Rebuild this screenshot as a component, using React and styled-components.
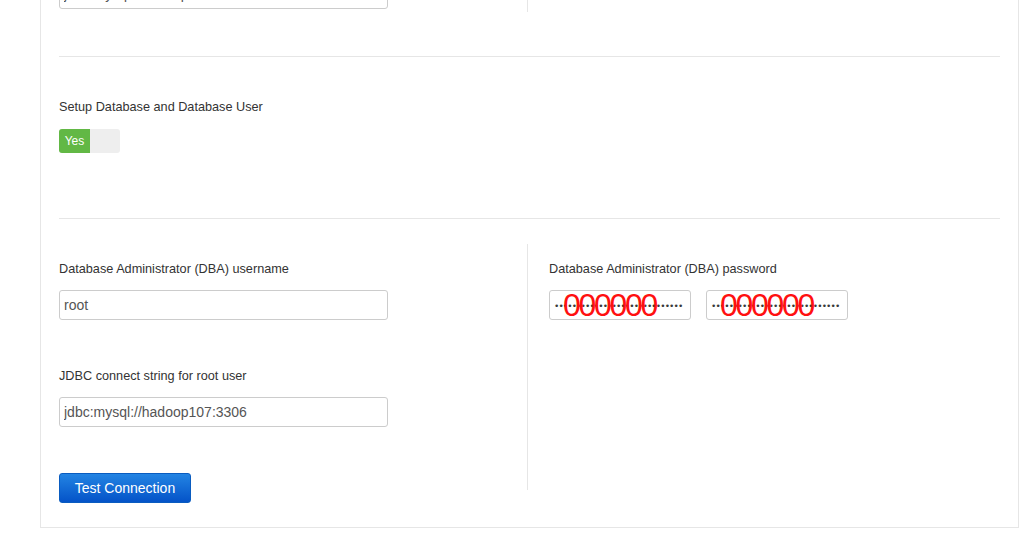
import React from 'react';
import styled, { createGlobalStyle } from 'styled-components';

const GlobalStyle = createGlobalStyle`
  body {
    margin: 0;
    background: #fff;
    font-family: "Liberation Sans", Arial, sans-serif;
    color: #333;
    overflow: hidden;
  }
`;

const Panel = styled.div`
  margin: -21px 0 0 40px;
  width: 979px;
  box-sizing: border-box;
  border: 1px solid #e6e6e6;
  border-top: none;
  padding: 0 18px 24px 18px;
`;

const Row = styled.div`
  display: grid;
  grid-template-columns: 468px 1fr;
  margin-top: ${p => p.top || 0}px;
`;

const Col = styled.div`
  display: flex;
  flex-direction: column;
  padding: ${p => p.pad || '0'};
  ${p => p.divided && 'border-left: 1px solid #e6e6e6; padding-left: 21px;'}
  ${p => p.short && `margin-bottom: ${p.short}px;`}
`;

const Rule = styled.div`
  height: 1px;
  background: #e6e6e6;
  margin-top: ${p => p.top}px;
`;

const Label = styled.div`
  font-size: 12.7px;
  line-height: 18px;
  color: #333;
  margin-top: ${p => p.top || 0}px;
`;

const Field = styled.input`
  box-sizing: border-box;
  width: ${p => p.w || 329}px;
  height: 30px;
  border: 1px solid #cccccc;
  border-radius: 3px;
  padding: 0 4px;
  font-family: "Liberation Sans", Arial, sans-serif;
  font-size: 14px;
  color: #555;
  margin-top: ${p => p.top || 0}px;
  outline: none;
  background: #fff;
`;

const Toggle = styled.div`
  display: flex;
  width: 61px;
  height: 24px;
  border-radius: 3px;
  overflow: hidden;
  background: #eeeeee;
  margin-top: 13px;
`;

const ToggleOn = styled.span`
  width: 31px;
  background: #62b845;
  color: #fff;
  font-size: 12px;
  line-height: 24px;
  text-align: center;
`;

const PasswordRow = styled.div`
  display: flex;
  gap: 15px;
  margin-top: 12px;
`;

const PasswordBox = styled.div`
  position: relative;
  box-sizing: border-box;
  width: 142px;
  height: 30px;
  border: 1px solid #cccccc;
  border-radius: 3px;
  padding-left: 5px;
  display: flex;
  align-items: center;
  overflow: hidden;
`;

const Dots = styled.span`
  font-size: 9.5px;
  letter-spacing: 1.1px;
  color: #3a3a3a;
  white-space: nowrap;
`;

const Marker = styled.span`
  position: absolute;
  left: 13px;
  top: -4px;
  font-size: 32px;
  line-height: 36px;
  letter-spacing: -2.3px;
  color: #ff1010;
`;

const Button = styled.button`
  width: 132px;
  height: 30px;
  margin-top: 46px;
  border: 1px solid #0a5cc0;
  border-radius: 3px;
  background: linear-gradient(#2384e3, #0453c8);
  color: #fff;
  font-family: "Liberation Sans", Arial, sans-serif;
  font-size: 14px;
  padding: 0;
`;

const dots = '•'.repeat(29);

export default function App() {
  return (
    <>
      <GlobalStyle />
      <Panel>
        <Row>
          <Col pad="0 0 3px 0">
            <Field defaultValue="jdbc:mysql://hadoop107:3306/metastore?useSSL=false" readOnly />
          </Col>
          <Col divided />
        </Row>
        <Rule top={44} />

        <Label top={41}>Setup Database and Database User</Label>
        <Toggle>
          <ToggleOn>Yes</ToggleOn>
        </Toggle>
        <Rule top={65} />

        <Row top={25}>
          <Col pad="16px 0 0 0">
            <Label>Database Administrator (DBA) username</Label>
            <Field top={12} defaultValue="root" readOnly />
            <Label top={47}>JDBC connect string for root user</Label>
            <Field top={12} defaultValue="jdbc:mysql://hadoop107:3306" readOnly />
            <Button>Test Connection</Button>
          </Col>
          <Col divided pad="16px 0 0 21px" short={13}>
            <Label>Database Administrator (DBA) password</Label>
            <PasswordRow>
              <PasswordBox>
                <Dots>{dots}</Dots>
                <Marker>000000</Marker>
              </PasswordBox>
              <PasswordBox>
                <Dots>{dots}</Dots>
                <Marker>000000</Marker>
              </PasswordBox>
            </PasswordRow>
          </Col>
        </Row>
      </Panel>
    </>
  );
}
